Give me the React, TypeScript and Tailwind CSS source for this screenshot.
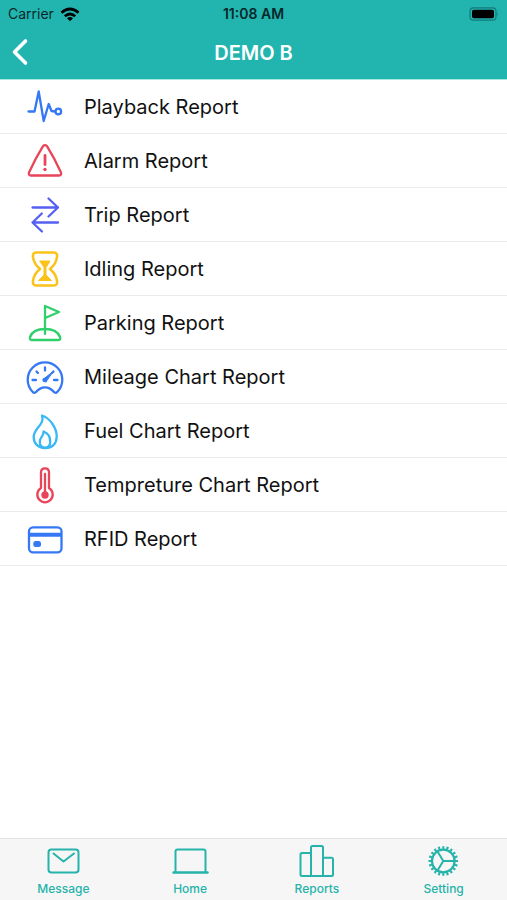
import type { ReactNode } from "react";

const reports: { name: string; color: string; icon: ReactNode }[] = [
    {
        name: "Playback Report",
        color: "text-[#3478f6]",
        icon: (
            <>
                <path d="M3.5 24.5H9.5L13.7 4.5L18.7 34L23.7 17L26.5 24L30 24.500" />
                <circle cx="33.3" cy="24.5" r="2.8" />
            </>
        ),
    },
    {
        name: "Alarm Report",
        color: "text-[#e8455a]",
        icon: (
            <>
                <path d="M18 5.2Q20 3 22 5.2Q29 16.500 36 31.500Q36.800 34.300 34 34.500H6Q3.200 34.300 4 31.500Q11 16.500 18 5.2Z" />
                <path d="M20 14.500V23.500" strokeWidth="2.800" />
                <circle cx="20" cy="28.500" r="1.700" fill="currentColor" stroke="none" />
            </>
        ),
    },
    {
        name: "Trip Report",
        color: "text-[#5560f2]",
        icon: (
            <>
                <path d="M7.500 12.500H33M23.500 3.500L33 12.500L23.500 21.500" />
                <path d="M33 27.500H7.500M16.800 18.500L7.500 27.500L17 36.500" />
            </>
        ),
    },
    {
        name: "Idling Report",
        color: "text-[#fbc21a]",
        icon: (
            <>
                <path d="M11 3.500H29Q32.500 3.500 32 8C31.500 14 28.500 17 25 20C28.500 23 31.500 26 32 32Q32.500 36.500 29 36.500H11Q7.500 36.500 8 32C8.500 26 11.500 23 15 20C11.500 17 8.500 14 8 8Q7.500 3.500 11 3.500Z" strokeWidth="2.600" />
                <path d="M15 12H25L21 18.500V26L26.500 31.500H13.500L19 26V18.500Z" fill="currentColor" strokeWidth="1" />
            </>
        ),
    },
    {
        name: "Parking Report",
        color: "text-[#2fd06b]",
        icon: (
            <>
                <path d="M20 31V3L34 9L20 15" />
                <path d="M7 37H33.500Q36 37 35 34C33 28.500 27.500 26 20 26S7 28.500 5 34Q4.500 37 7 37Z" />
            </>
        ),
    },
    {
        name: "Mileage Chart Report",
        color: "text-[#3478f6]",
        icon: (
            <>
                <path d="M10.500 35.400Q9 36.500 7.800 35A17.300 17.300 0 1 1 32.200 35Q31 36.500 29.500 35.400C26.500 32 24 30.300 20 30.300S13.500 32 10.500 35.400Z" />
                <path d="M20 10.500V13.500M11.500 14.500L13 16M7.500 23H11M29 23H32.500M28.500 14.500L27 16" />
                <path d="M28 14.500L18 22.500L20.500 25Z" fill="currentColor" strokeWidth="1" />
                <circle cx="19.700" cy="23" r="2.300" fill="currentColor" stroke="none" />
            </>
        ),
    },
    {
        name: "Fuel Chart Report",
        color: "text-[#39b8f5]",
        icon: (
            <>
                <path d="M17 4.500C25 7 31.700 17 31.700 25.500C31.700 33 27 37 20 37C13 37 8.700 32.500 8.700 26C8.700 17 20 14 17 4.500Z" />
                <path d="M18.600 20.500C22.500 22 25.200 26 25.200 30.500C25.200 34.500 23.500 36.800 20 36.800S14.800 34.500 14.800 30.500C14.800 26.500 18.800 25 18.600 20.500Z" />
            </>
        ),
    },
    {
        name: "Tempreture Chart Report",
        color: "text-[#e8455a]",
        icon: (
            <>
                <path d="M16 23V7.500Q16 3.300 20 3.300T24 7.500V23A7.700 7.700 0 1 1 16 23Z" />
                <path d="M20 9V28" />
                <circle cx="20" cy="30" r="3.700" fill="currentColor" stroke="none" />
            </>
        ),
    },
    {
        name: "RFID Report",
        color: "text-[#3478f6]",
        icon: (
            <>
                <rect x="4" y="8.300" width="32.500" height="25" rx="4" />
                <path d="M4 15.700H36.500" strokeWidth="4" strokeLinecap="butt" />
                <rect x="8.300" y="22" width="7.700" height="6" rx="2.500" fill="currentColor" stroke="none" />
            </>
        ),
    },
];

const tabs: { name: string; icon: ReactNode }[] = [
    {
        name: "Message",
        icon: (
            <>
                <rect x="3.500" y="6.500" width="30" height="23" rx="3" />
                <path d="M8.500 10.500L18.500 18.500L29 10.500" />
            </>
        ),
    },
    {
        name: "Home",
        icon: (
            <>
                <path d="M3.500 29V8.500Q3.500 6.500 5.500 6.500H31.500Q33.500 6.500 33.500 8.500V29" />
                <path d="M1.500 29.500H35.500" strokeWidth="2.400" />
            </>
        ),
    },
    {
        name: "Reports",
        icon: (
            <path d="M13 33V10H4Q2.500 10 2.500 11.500V31.500Q2.500 33 4 33H33.500Q35 33 35 31.500V16Q35 14.700 33.500 14.700H25M13 12V4.500Q13 3 14.500 3H23.500Q25 3 25 4.500V33" />
        ),
    },
    {
        name: "Setting",
        icon: (
            <>
                <circle cx="18.300" cy="18" r="11.300" strokeWidth="2.200" />
                <circle cx="18.300" cy="18" r="13.300" pathLength="40" strokeDasharray="1 1" strokeDashoffset="0.5" strokeWidth="3" strokeLinecap="butt" />
                <path d="M29.500 18H18.300L12.500 8.500M18.300 18L12.500 27.500" />
            </>
        ),
    },
];

function StatusBar() {
    return (
        <div className="grid h-7 grid-cols-3 items-center px-2 text-[15px] text-[#06282a]">
            <div className="flex items-center gap-1.5">
                <span className="text-sm">Carrier</span>
                <svg viewBox="0 0 20 15" className="h-[15px] w-5" fill="none" stroke="black" strokeWidth="2.7">
                    <path d="M1.500 5.800Q10 -1.800 18.500 5.800" />
                    <path d="M4.800 9.300Q10 4.700 15.200 9.300" />
                    <path d="M10 14.300L7 11.300Q10 8.900 13 11.300Z" fill="black" stroke="none" />
                </svg>
            </div>
            <span className="text-center text-sm font-semibold">11:08 AM</span>
            <svg viewBox="0 0 31 14" className="h-3.5 w-[31px] justify-self-end">
                <rect x="2" y="0.800" width="26" height="12.400" rx="3.500" fill="none" stroke="#137a78" strokeWidth="1.200" />
                <rect x="4" y="2.700" width="22" height="8.600" rx="1.800" fill="black" />
                <path d="M29.300 4.700Q31 7 29.300 9.300Z" fill="#137a78" />
            </svg>
        </div>
    );
}

export default function App() {
    return (
        <div className="flex min-h-screen flex-col bg-white font-[Inter,'Liberation_Sans',sans-serif]">
            <header className="border-b border-[#a5e6e2] bg-[#22b5b0]">
                <StatusBar />
                <div className="grid h-[51px] grid-cols-[1fr_auto_1fr] items-center px-2 pb-0.5">
                    <button aria-label="Back" className="justify-self-start text-white">
                        <svg viewBox="0 0 24 30" className="h-[30px] w-6" fill="none" stroke="currentColor" strokeWidth="3.600" strokeLinecap="round" strokeLinejoin="round">
                            <path d="M17.500 3L6.500 14L17.500 25" />
                        </svg>
                    </button>
                    <h1 className="text-xl font-semibold text-white">DEMO B</h1>
                </div>
            </header>

            <main className="flex-1">
                <ul>
                    {reports.map((report) => (
                        <li key={report.name} className="border-b border-[#ebebeb]">
                            <a href="#" className="flex h-[53px] items-center gap-[19px] pl-[25px] text-xl text-[#111111]">
                                <svg
                                    viewBox="0 0 40 40"
                                    className={`size-10 ${report.color}`}
                                    fill="none"
                                    stroke="currentColor"
                                    strokeWidth="2.3"
                                    strokeLinecap="round"
                                    strokeLinejoin="round"
                                >
                                    {report.icon}
                                </svg>
                                <span>{report.name}</span>
                            </a>
                        </li>
                    ))}
                </ul>
            </main>

            <nav className="grid h-[62px] grid-cols-4 border-t border-[#e4e4e4] bg-[#f6f6f6]">
                {tabs.map((tab) => (
                    <a key={tab.name} href="#" className="flex flex-col items-center gap-0.5 pt-1 text-xs font-medium text-[#25b3aa]">
                        <svg
                            viewBox="0 0 37 36"
                            className="h-9 w-[37px]"
                            fill="none"
                            stroke="currentColor"
                            strokeWidth="2"
                            strokeLinecap="round"
                            strokeLinejoin="round"
                        >
                            {tab.icon}
                        </svg>
                        <span>{tab.name}</span>
                    </a>
                ))}
            </nav>
        </div>
    );
}
